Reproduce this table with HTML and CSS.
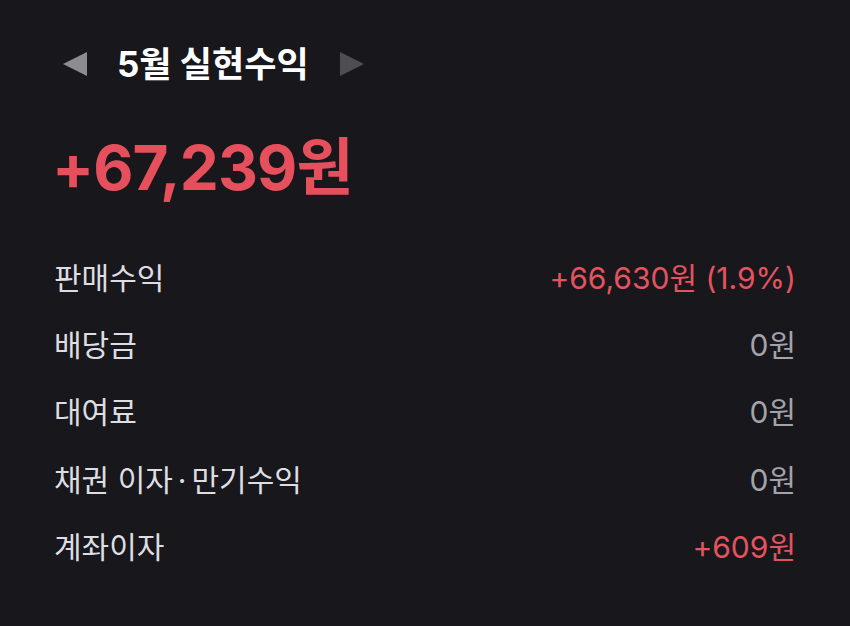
FILE: index.html
```html
<!DOCTYPE html>
<html lang="ko">
<head>
<meta charset="utf-8">
<link rel="stylesheet" href="styles.css">
</head>
<body>
<main class="card">
  <header class="month-nav">
    <span class="arrow arrow-left" aria-label="이전 달"></span>
    <h1 class="title">5월 실현수익</h1>
    <span class="arrow arrow-right" aria-label="다음 달"></span>
  </header>
  <div class="total">+67,239원</div>
  <ul class="rows">
    <li class="row"><span class="label">판매수익</span><span class="value plus">+66,630원 (1.9%)</span></li>
    <li class="row"><span class="label">배당금</span><span class="value">0원</span></li>
    <li class="row"><span class="label">대여료</span><span class="value">0원</span></li>
    <li class="row"><span class="label">채권 이자<span class="dot">·</span>만기수익</span><span class="value">0원</span></li>
    <li class="row"><span class="label">계좌이자</span><span class="value plus">+609원</span></li>
  </ul>
</main>
</body>
</html>
```
FILE: styles.css
```css
html, body {
  margin: 0;
  padding: 0;
  background: #18171c;
}
body {
  width: 850px;
  height: 626px;
  overflow: hidden;
  font-family: "Inter", "Noto Sans CJK KR", "Noto Sans", sans-serif;
  color: #e2e2e6;
}
.card {
  padding: 36px 54px 0 54px;
}
.month-nav {
  display: flex;
  align-items: center;
  height: 56px;
  padding-left: 9px;
}
.arrow {
  width: 0;
  height: 0;
  border-top: 12px solid transparent;
  border-bottom: 12px solid transparent;
}
.arrow-left {
  border-right: 24px solid #8c8c93;
}
.arrow-right {
  border-left: 24px solid #4d4d54;
}
.title {
  margin: 0 31px 0 30px;
  font-size: 35px;
  font-weight: 700;
  color: #ffffff;
  letter-spacing: 0;
  line-height: 56px;
}
.total {
  margin-top: 34px;
  margin-left: -2px;
  font-size: 62px;
  font-weight: 700;
  color: #e64f5c;
  line-height: 84px;
  letter-spacing: -0.9px;
}
.rows {
  list-style: none;
  margin: 32px 0 0 0;
  padding: 0;
}
.row {
  display: flex;
  justify-content: space-between;
  align-items: center;
  height: 67.3px;
  font-size: 30px;
}
.label {
  color: #dedee2;
}
.dot {
  margin: 0 5px;
}
.value {
  color: #a3a3a9;
}
.value.plus {
  color: #e5535f;
}
```
